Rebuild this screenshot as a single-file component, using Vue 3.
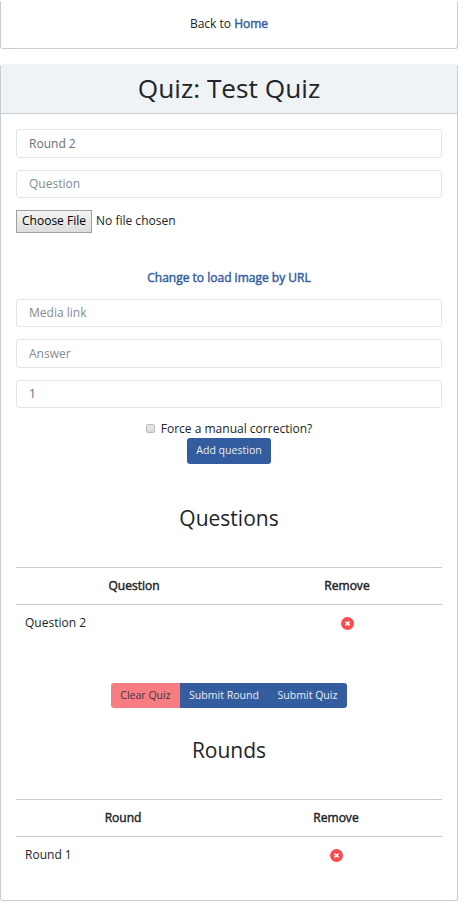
<script setup>
import { ref } from 'vue'

const roundName = ref('Round 2')
const question = ref('')
const media = ref('')
const answer = ref('')
const points = ref('1')
const manual = ref(false)
const tables = {
  questions: { label: 'Question', rows: ['Question 2'] },
  rounds: { label: 'Round', rows: ['Round 1'] },
}
</script>

<template>
  <main class="page">
    <nav class="card back"><span>Back to <a class="link">Home</a></span></nav>

    <section class="card quiz">
      <header class="card-header"><h1>Quiz: Test Quiz</h1></header>
      <div class="card-body">
        <div class="fields">
          <input v-model="roundName" class="control tall" type="text" />
          <input v-model="question" class="control" type="text" placeholder="Question" />
        </div>
        <div class="file">
          <button class="choose" type="button">Choose File</button>
          <span>No file chosen</span>
        </div>
        <div class="switch"><a class="link">Change to load image by URL</a></div>
        <div class="fields">
          <input v-model="media" class="control" type="text" placeholder="Media link" />
          <input v-model="answer" class="control tall" type="text" placeholder="Answer" />
          <input v-model="points" class="control" type="text" />
        </div>
        <label class="check">
          <input v-model="manual" type="checkbox" />
          <span>Force a manual correction?</span>
        </label>
        <div class="center"><button class="btn add" type="button">Add question</button></div>

        <template v-for="(table, key) in tables" :key="key">
          <h2 :class="key">{{ key === 'questions' ? 'Questions' : 'Rounds' }}</h2>
          <div class="table" :class="key">
            <div class="row head"><span>{{ table.label }}</span><span>Remove</span></div>
            <div v-for="row in table.rows" :key="row" class="row">
              <span class="name">{{ row }}</span>
              <span class="remove">
                <svg viewBox="0 0 13 13" width="13" height="13">
                  <circle cx="6.5" cy="6.5" r="6.5" fill="#ff4b4f" />
                  <path d="M4.5 4.7l4 3.6M8.5 4.7l-4 3.6" stroke="#fff" stroke-width="1.7" />
                </svg>
              </span>
            </div>
          </div>
          <div v-if="key === 'questions'" class="center actions">
            <button class="btn clear" type="button">Clear Quiz</button>
            <button class="btn submit-round" type="button">Submit Round</button>
            <button class="btn submit-quiz" type="button">Submit Quiz</button>
          </div>
        </template>
      </div>
    </section>
  </main>
</template>

<style>
body { background: #fff; }
</style>

<style scoped>
* { box-sizing: border-box; }
.page {
  width: 458px;
  font: 12.02px/18px "Open Sans", sans-serif;
  color: #212529;
}
.card { border: 1px solid #c8ccd4; border-radius: 3px; background: #fff; }
.back {
  height: 49px;
  padding-bottom: 2px;
  border-top-color: #fff;
  display: flex;
  align-items: center;
  justify-content: center;
}
.link { color: #345d9f; -webkit-text-stroke: 0.45px #345d9f; }
.quiz { margin-top: 15px; height: 837px; border-top-color: #eff3f6; }
.card-header {
  height: 49px;
  padding-bottom: 2px;
  background: #eff3f6;
  border-bottom: 1px solid #c8ccd4;
  display: flex;
  justify-content: center;
  align-items: center;
}
h1, h2 { margin: 0; font-weight: 400; text-align: center; }
h1 { font-size: 26.25px; line-height: 32px; }
h2 { font-size: 21px; line-height: 25px; }
.card-body { padding: 15px; }
.fields { display: flex; flex-direction: column; gap: 12px; }
.control {
  width: 100%;
  height: 28px;
  padding: 0 12px 1px;
  border: 1px solid #e2e5e8;
  border-radius: 3px;
  background: #fff;
  font: inherit;
  color: #687078;
  outline: none;
}
.control.tall { height: 29px; padding-bottom: 0; }
.control::placeholder { color: #838c94; opacity: 1; }
.file { margin-top: 12px; display: flex; height: 23px; gap: 4px; line-height: 21px; }
.choose {
  width: 76px;
  height: 23px;
  padding: 0 0 1px;
  border: 1px solid #a0a0a0;
  border-radius: 0;
  background: linear-gradient(#f4f4f4, #dcdcdc);
  font: inherit;
  line-height: 20px;
  color: #000;
}
.switch { height: 66px; padding-top: 36px; text-align: center; }
.check {
  height: 30px;
  padding: 12px 0 0;
  display: flex;
  justify-content: center;
  line-height: 18px;
}
.check input {
  appearance: none;
  width: 9px;
  height: 9px;
  margin: 4px 6px 0 0;
  border: 1px solid #b9b9b9;
  border-radius: 2px;
  background: linear-gradient(#e9e9e9, #d9d9d9);
}
.center { display: flex; justify-content: center; }
.btn {
  height: 25px;
  padding: 0 0 1px;
  border: 0;
  background: #345d9f;
  color: #e9eef5;
  font: 10.55px/22px "Open Sans", sans-serif;
}
.add { width: 84px; height: 26px; padding-bottom: 3px; border-radius: 3px; }
h2.questions { margin-top: 42px; }
h2.rounds { margin-top: 30px; }
.table { margin-top: 36px; }
.row { display: grid; grid-template-columns: 236px 190px; height: 37px; line-height: 36px; }
.rounds .row { grid-template-columns: 214px 212px; }
.head { height: 38px; border: solid #c8ccd1; border-width: 1px 0; text-align: center; -webkit-text-stroke: 0.45px #212529; }
.name { padding-left: 9px; }
.remove { display: flex; align-items: center; justify-content: center; padding-bottom: 1px; }
.actions { margin-top: 41px; }
.clear { width: 69px; background: #f77d82; color: #45343b; border-radius: 3px 0 0 3px; }
.submit-round { width: 88px; }
.submit-quiz { width: 79px; border-radius: 0 3px 3px 0; }
</style>
